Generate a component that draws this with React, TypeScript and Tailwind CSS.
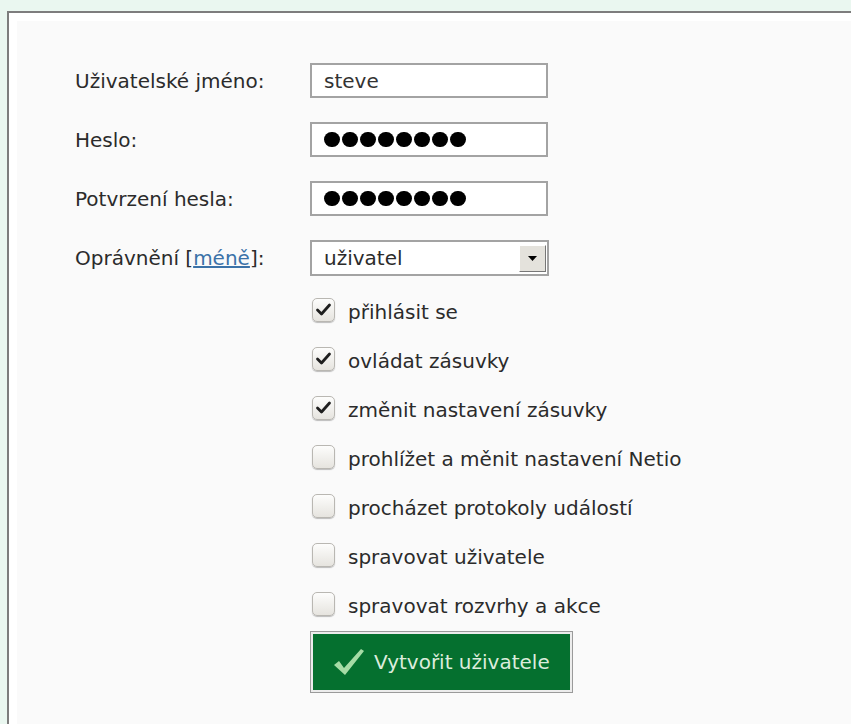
import React from "react"

const permissions = [
  { label: "přihlásit se", checked: true },
  { label: "ovládat zásuvky", checked: true },
  { label: "změnit nastavení zásuvky", checked: true },
  { label: "prohlížet a měnit nastavení Netio", checked: false },
  { label: "procházet protokoly událostí", checked: false },
  { label: "spravovat uživatele", checked: false },
  { label: "spravovat rozvrhy a akce", checked: false },
]

function Dots({ count }: { count: number }) {
  return (
    <div className="flex gap-[2.5px]">
      {Array.from({ length: count }).map((_, i) => (
        <span key={i} className="block w-[15.5px] h-[15.5px] rounded-full bg-black" />
      ))}
    </div>
  )
}

function Box({ children }: { children?: React.ReactNode }) {
  return (
    <div className="w-[238px] h-full bg-white border-2 border-[#a3a3a3] flex items-center pl-[12px] text-[#333]">
      {children}
    </div>
  )
}

function Checkbox({ checked }: { checked: boolean }) {
  return (
    <span className="w-[23px] h-[24px] rounded-[5px] border border-[#b9b7b2] bg-gradient-to-b from-[#fdfdfc] to-[#e6e4df] shadow-[0_1px_1px_rgba(0,0,0,0.25)] flex items-center justify-center">
      {checked && (
        <svg width="17" height="17" viewBox="0 0 17 17">
          <path d="M2.5 9 L6.5 13 L14.5 4" fill="none" stroke="#1e1e1e" strokeWidth="2.8" strokeLinecap="round" strokeLinejoin="round" />
        </svg>
      )}
    </span>
  )
}

export default function App() {
  return (
    <div className="w-[851px] h-[724px] overflow-hidden bg-[#eaf7f0] pt-[11px] pl-[7px] font-['DejaVu_Sans',sans-serif] text-[20px]">
      <div className="h-full border-t-2 border-l-2 border-[#7d7d7d] bg-white pt-[8px] pl-[8px]">
        <div className="h-full bg-[#fafafa] pt-[42px] pl-[58px]">
          <div className="flex flex-col gap-[24px]">
            <div className="flex items-center h-[35px]">
              <label className="w-[235px] text-[#2b2b2b]">Uživatelské jméno:</label>
              <Box>steve</Box>
            </div>
            <div className="flex items-center h-[35px]">
              <label className="w-[235px] text-[#2b2b2b]">Heslo:</label>
              <Box><Dots count={8} /></Box>
            </div>
            <div className="flex items-center h-[35px]">
              <label className="w-[235px] text-[#2b2b2b]">Potvrzení hesla:</label>
              <Box><Dots count={8} /></Box>
            </div>
            <div className="flex items-center h-[36px]">
              <label className="w-[235px] text-[#2b2b2b]">
                Oprávnění [<a className="text-[#3b72a8] underline">méně</a>]:
              </label>
              <div className="w-[239px] h-full bg-white border-2 border-[#a3a3a3] flex items-center justify-between pl-[12px] pr-[1px] text-[#2b2b2b]">
                <span>uživatel</span>
                <span className="w-[27px] h-[27px] bg-[#e4e2dc] border border-t-white border-l-white border-r-[#777] border-b-[#777] flex items-center justify-center">
                  <svg width="9" height="5" viewBox="0 0 9 5">
                    <path d="M0 0 H9 L4.5 5 Z" fill="#000" />
                  </svg>
                </span>
              </div>
            </div>
          </div>

          <div className="ml-[235px] mt-[9px]">
            {permissions.map((p) => (
              <div key={p.label} className="flex items-center h-[49px] pl-[2px] gap-[13px] text-[#2b2b2b]">
                <Checkbox checked={p.checked} />
                <span className="pt-[4px]">{p.label}</span>
              </div>
            ))}

            <button className="mt-[3px] w-[263px] h-[62px] border border-[#9a9a9a] bg-[#ececec] p-[2px] block">
              <span className="h-full w-full bg-[#05702f] flex items-center pl-[20px] gap-[9px] text-[#dcecdc]">
                <svg width="32" height="30" viewBox="0 0 32 30">
                  <path d="M1 18 L6 14 L11 21 L28 2 L31 4 L12 28 Z" fill="#a6dca6" />
                </svg>
                <span>Vytvořit uživatele</span>
              </span>
            </button>
          </div>
        </div>
      </div>
    </div>
  )
}
